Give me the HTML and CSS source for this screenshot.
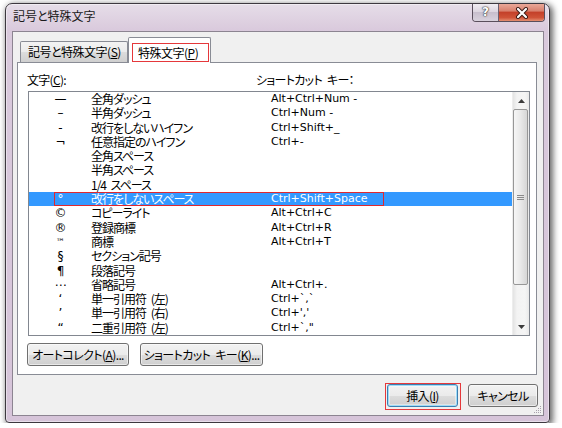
FILE: index.html
```html
<!DOCTYPE html>
<html lang="ja">
<head>
<meta charset="UTF-8">
<title>記号と特殊文字</title>
<link rel="stylesheet" href="styles.css">
</head>
<body>

<div class="window">
    <div class="titlebar">
        <span class="title">記号と特殊文字</span>
        <div class="caption-btns">
            <span class="cap-help">?</span>
            <span class="cap-close">
                <svg width="16" height="12" viewBox="0 0 16 12">
                    <path d="M4 2 L12 10 M12 2 L4 10" stroke="#3a1a14" stroke-width="4" stroke-linecap="round"/>
                    <path d="M4 2 L12 10 M12 2 L4 10" stroke="#fff" stroke-width="2.2" stroke-linecap="round"/>
                </svg>
            </span>
        </div>
    </div>

    <div class="client">
        <div class="tabs">
            <div class="tab">記号と特殊文字(<u>S</u>)</div>
            <div class="tab active"><span class="mark">特殊文字(<u>P</u>)</span></div>
        </div>

        <div class="panel">
            <div class="labels">
                <span class="label-char">文字(<u>C</u>):</span>
                <span>ショートカット キー：</span>
            </div>

            <div class="list">
                <div class="rows">
                    <div class="row"><div class="cells"><span class="sym">—</span><span class="name">全角ダッシュ</span><span class="key">Alt+Ctrl+Num -</span></div></div>
                    <div class="row"><div class="cells"><span class="sym">–</span><span class="name">半角ダッシュ</span><span class="key">Ctrl+Num -</span></div></div>
                    <div class="row"><div class="cells"><span class="sym">-</span><span class="name">改行をしないハイフン</span><span class="key">Ctrl+Shift+_</span></div></div>
                    <div class="row"><div class="cells"><span class="sym">¬</span><span class="name">任意指定のハイフン</span><span class="key">Ctrl+-</span></div></div>
                    <div class="row"><div class="cells"><span class="sym"></span><span class="name">全角スペース</span><span class="key"></span></div></div>
                    <div class="row"><div class="cells"><span class="sym"></span><span class="name">半角スペース</span><span class="key"></span></div></div>
                    <div class="row"><div class="cells"><span class="sym"></span><span class="name">1/4 スペース</span><span class="key"></span></div></div>
                    <div class="row selected"><div class="cells"><span class="sym">°</span><span class="name">改行をしないスペース</span><span class="key">Ctrl+Shift+Space</span></div></div>
                    <div class="row"><div class="cells"><span class="sym">©</span><span class="name">コピーライト</span><span class="key">Alt+Ctrl+C</span></div></div>
                    <div class="row"><div class="cells"><span class="sym">®</span><span class="name">登録商標</span><span class="key">Alt+Ctrl+R</span></div></div>
                    <div class="row"><div class="cells"><span class="sym sym-tm">™</span><span class="name">商標</span><span class="key">Alt+Ctrl+T</span></div></div>
                    <div class="row"><div class="cells"><span class="sym">§</span><span class="name">セクション記号</span><span class="key"></span></div></div>
                    <div class="row"><div class="cells"><span class="sym">¶</span><span class="name">段落記号</span><span class="key"></span></div></div>
                    <div class="row"><div class="cells"><span class="sym">⋯</span><span class="name">省略記号</span><span class="key">Alt+Ctrl+.</span></div></div>
                    <div class="row"><div class="cells"><span class="sym">‘</span><span class="name">単一引用符 (左)</span><span class="key">Ctrl+`,`</span></div></div>
                    <div class="row"><div class="cells"><span class="sym">’</span><span class="name">単一引用符 (右)</span><span class="key">Ctrl+','</span></div></div>
                    <div class="row"><div class="cells"><span class="sym">“</span><span class="name">二重引用符 (左)</span><span class="key">Ctrl+`,"</span></div></div>
                </div>

                <div class="scrollbar">
                    <div class="arrow">
                        <svg width="7" height="4" viewBox="0 0 7 4"><path d="M0 4 L3.5 0 L7 4 Z" fill="#3c3c3c"/></svg>
                    </div>
                    <div class="thumb"><span class="grip-lines"></span></div>
                    <div class="track"></div>
                    <div class="arrow">
                        <svg width="7" height="4" viewBox="0 0 7 4"><path d="M0 0 L7 0 L3.5 4 Z" fill="#3c3c3c"/></svg>
                    </div>
                </div>
            </div>

            <div class="panel-buttons">
                <button class="btn btn-autocorrect">オートコレクト(<u>A</u>)...</button>
                <button class="btn btn-shortcut">ショートカット キー(<u>K</u>)...</button>
            </div>
        </div>

        <div class="dialog-buttons">
            <span class="mark-box"><button class="btn btn-default">挿入(<u>I</u>)</button></span>
            <button class="btn btn-cancel">キャンセル</button>
        </div>

        <svg class="size-grip" width="8" height="8" viewBox="0 0 8 8">
            <rect x="6" y="0" width="1" height="1" fill="#a8a0ac"/>
            <rect x="4" y="2" width="1" height="1" fill="#a8a0ac"/>
            <rect x="6" y="2" width="1" height="1" fill="#a8a0ac"/>
            <rect x="2" y="4" width="1" height="1" fill="#a8a0ac"/>
            <rect x="4" y="4" width="1" height="1" fill="#a8a0ac"/>
            <rect x="6" y="4" width="1" height="1" fill="#a8a0ac"/>
            <rect x="0" y="6" width="1" height="1" fill="#a8a0ac"/>
            <rect x="2" y="6" width="1" height="1" fill="#a8a0ac"/>
            <rect x="4" y="6" width="1" height="1" fill="#a8a0ac"/>
            <rect x="6" y="6" width="1" height="1" fill="#a8a0ac"/>
        </svg>
    </div>
</div>

</body>
</html>
```

FILE: styles.css
```css
* {
    box-sizing: border-box;
}
body {
    margin: 0;
    padding: 3px 0 0 5px;
    background: #ffffff;
    font-family: "Noto Sans CJK JP", sans-serif;
    font-size: 12px;
    font-feature-settings: "palt";
    color: #000;
    overflow: hidden;
}

/* window frame */
.window {
    width: 545px;
    height: 420px;
    padding: 0 5px 6px 6px;
    border: 1px solid #3d383f;
    border-radius: 7px 7px 4px 4px;
    background: linear-gradient(#e6dde8, #d9c9dc 27px, #d6c4d9);
    box-shadow: inset 0 0 0 1px rgba(255, 255, 255, 0.45), 2px 2px 6px 1px rgba(0, 0, 0, 0.6);
    display: flex;
    flex-direction: column;
}
.titlebar {
    height: 27px;
    display: flex;
    justify-content: space-between;
    align-items: flex-start;
    margin-right: -1px;
}
.title {
    margin-top: 4px;
    padding-left: 1px;
    line-height: 16px;
    color: #1a1a1a;
}
.caption-btns {
    display: flex;
    height: 18px;
    border: 1px solid #5a4f5c;
    border-top: none;
    border-radius: 0 0 4px 4px;
    overflow: hidden;
}
.cap-help {
    width: 26px;
    border-right: 1px solid #6b6070;
    background: linear-gradient(#f1edf2, #ddd6e0 45%, #c8bfcd 50%, #d9d2dd);
    color: #fff;
    font-family: "DejaVu Sans", sans-serif;
    font-weight: bold;
    font-size: 12px;
    line-height: 17px;
    text-align: center;
    text-shadow: 0 0 1px #333, 0 0 1px #333, 0 0 2px #555;
}
.cap-close {
    width: 45px;
    background: linear-gradient(#eaa898, #d9826f 40%, #c4412a 50%, #cf5338 80%, #e48f72);
    display: flex;
    align-items: center;
    justify-content: center;
}

/* dialog body */
.client {
    flex: 1;
    position: relative;
    border: 1px solid #8c8491;
    background: #f0f0f0;
}
.tabs {
    display: flex;
    align-items: flex-end;
    height: 30px;
    padding: 5px 0 0 7px;
}
.tab {
    width: 108px;
    height: 21px;
    padding: 1px 0 0 7px;
    border: 1px solid #898c95;
    border-bottom: none;
    border-radius: 2px 2px 0 0;
    background: linear-gradient(#f3f3f3, #ebebeb 50%, #dddddd 51%, #cfcfcf);
    line-height: 18px;
    letter-spacing: -0.5px;
    white-space: nowrap;
}
.tab.active {
    position: relative;
    z-index: 1;
    width: 83px;
    height: 26px;
    margin-bottom: -1px;
    padding: 5px 0 0 3px;
    background: #ffffff;
}
.mark {
    display: inline-block;
    width: 77px;
    height: 19px;
    padding-left: 5px;
    border: 1px solid #e5383b;
    line-height: 17px;
}
.panel {
    width: 520px;
    height: 313px;
    margin-left: 4px;
    border: 1px solid #898c95;
    background: #ffffff;
}
.labels {
    display: flex;
    padding: 10px 0 0 9px;
    line-height: 14px;
    letter-spacing: -0.7px;
    word-spacing: 3px;
    white-space: nowrap;
}
.label-char {
    width: 229px;
}

/* list of characters */
.list {
    display: flex;
    width: 502px;
    height: 245px;
    margin: 4px 0 0 10px;
    border: 1px solid #828790;
}
.rows {
    flex: 1;
    overflow: hidden;
}
.row {
    height: 14.3px;
    line-height: 14.3px;
    white-space: nowrap;
}
.row.selected {
    background: #3399ff;
    color: #ffffff;
}
.cells {
    display: grid;
    grid-template-columns: 37px 180px 1fr;
    width: 330px;
    height: 100%;
    margin-left: 25px;
}
.row.selected .cells {
    box-shadow: inset 0 0 0 1px #e0282e;
}
.sym {
    padding-right: 24px;
    font-family: "DejaVu Sans", sans-serif;
    font-size: 12px;
    text-align: center;
}
.sym-tm {
    font-size: 9px;
}
.name {
    letter-spacing: -1px;
    word-spacing: 3px;
}
.key {
    font-family: "DejaVu Sans", sans-serif;
    font-size: 11px;
}

.scrollbar {
    width: 17px;
    display: flex;
    flex-direction: column;
    background: linear-gradient(to right, #e3e3e3, #f3f3f3 25%, #f5f5f5 75%, #e9e9e9);
    border-left: 1px solid #ededed;
}
.arrow {
    height: 17px;
    display: flex;
    align-items: center;
    justify-content: center;
}
.thumb {
    height: 176px;
    margin: 0 1px 0 0;
    border: 1px solid #979797;
    border-radius: 2px;
    background: linear-gradient(to right, #f6f6f6, #e9e9e9 50%, #d6d6d6);
    display: flex;
    align-items: center;
    justify-content: center;
}
.grip-lines {
    width: 7px;
    height: 5px;
    border-top: 1px solid #8a8a8a;
    border-bottom: 1px solid #8a8a8a;
    background: linear-gradient(transparent 1px, #8a8a8a 1px, #8a8a8a 2px, transparent 2px);
}
.track {
    flex: 1;
}

/* buttons */
.panel-buttons {
    display: flex;
    gap: 11px;
    margin: 7px 0 0 9px;
}
.btn {
    height: 23px;
    padding: 0;
    border: 1px solid #707070;
    border-radius: 3px;
    background: linear-gradient(#f2f2f2, #ebebeb 50%, #dddddd 51%, #cfcfcf);
    box-shadow: inset 0 0 0 1px rgba(255, 255, 255, 0.55);
    font-family: "Noto Sans CJK JP", sans-serif;
    font-size: 12px;
    font-feature-settings: "palt";
    letter-spacing: -0.6px;
    word-spacing: 3px;
    color: #000;
    line-height: 20px;
    white-space: nowrap;
}
.btn-autocorrect {
    width: 102px;
}
.btn-shortcut {
    width: 123px;
}
.dialog-buttons {
    display: flex;
    justify-content: flex-end;
    align-items: flex-start;
    gap: 7px;
    margin-top: 8px;
    padding-right: 5px;
}
.mark-box {
    display: flex;
    padding: 0 2px 2px 1px;
    border: 1px solid #e5383b;
}
.btn-default {
    width: 71px;
    border-color: #3c7fb1;
    box-shadow: inset 0 0 0 1px #9fdcf8, inset 0 0 0 2px rgba(255, 255, 255, 0.4);
}
.btn-cancel {
    width: 70px;
    margin-top: 1px;
}
.size-grip {
    position: absolute;
    right: 1px;
    bottom: 1px;
}
```
